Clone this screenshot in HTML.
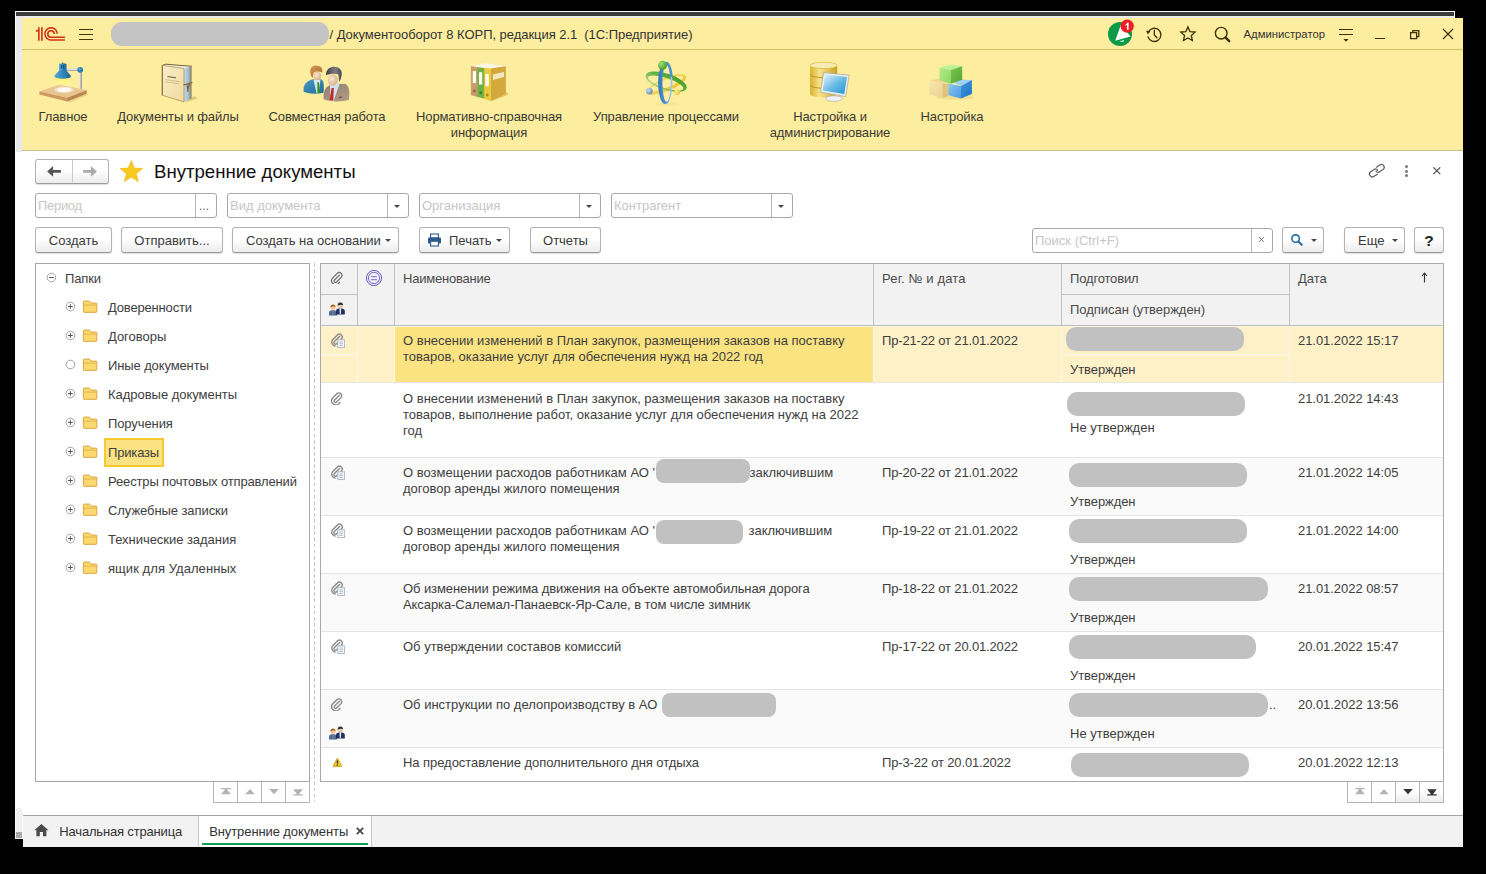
<!DOCTYPE html>
<html lang="ru">
<head>
<meta charset="utf-8">
<title>Внутренние документы</title>
<style>
*{box-sizing:border-box;margin:0;padding:0}
html,body{width:1486px;height:874px;overflow:hidden;background:#000}
body{font-family:"Liberation Sans",sans-serif;font-size:13px;color:#333;position:relative}
.abs{position:absolute}
.t{position:absolute;white-space:pre;line-height:16px}
/* window chrome */
#back{left:15px;top:11px;width:1440px;height:828px;background:#fff}
#darkbar{left:16px;top:12px;width:1438px;height:4px;background:#3b3b3b}
#gtop{left:16px;top:16px;width:1438px;height:3px;background:#ebebeb}
#gleft{left:16px;top:16px;width:6px;height:136px;background:#e9e9e9}
#gleft2{left:16px;top:808px;width:7px;height:31px;background:#f0f0f0}
#gsq{left:16px;top:832px;width:7px;height:6px;background:#a9a9a9}
#main{left:22px;top:18px;width:1441px;height:829px;background:#fff}
#mainR{left:1455px;top:11px;width:8px;height:8px;background:#000}
#yellow{left:22px;top:18px;width:1441px;height:133px;background:#fded9f}
#yl1{left:22px;top:49px;width:1441px;height:1px;background:#d3c16c}
#yl2{left:22px;top:150px;width:1441px;height:1px;background:#cdc38c}
/* section panel */
.sec{position:absolute;top:109px;letter-spacing:-0.12px;text-align:center;line-height:16px;color:#3a3a33;white-space:pre}
/* buttons */
.btn{position:absolute;height:26px;border:1px solid #b3b3b3;border-bottom-color:#9b9b9b;border-radius:3px;background:linear-gradient(#fff 0,#fff 45%,#ececec 100%);box-shadow:0 1px 1px rgba(0,0,0,.13);text-align:center;line-height:25px;color:#3a3a3a;white-space:pre}
.inp{position:absolute;height:25px;border:1px solid #a8a8a8;border-radius:3px;background:#fff;color:#c6c6c6;line-height:24px;padding-left:2px;white-space:pre}
.inp i{position:absolute;top:0;bottom:0;width:1px;background:#b8b8b8}
.dd{position:absolute;top:10.6px;width:0;height:0;border-left:3.3px solid transparent;border-right:3.3px solid transparent;border-top:3.6px solid #484848}
/* tree */
#tree{left:35px;top:263px;width:275px;height:519px;border:1px solid #a6a6a6;background:#fff}
.tr{position:absolute;white-space:pre;line-height:16px;color:#3e3e3e}
/* table */
#tbl{left:320px;top:263px;width:1124px;height:519px;border:1px solid #a6a6a6;background:#fff;overflow:hidden}
.hd{position:absolute;background:#f2f2f2}
.cell{position:absolute;white-space:pre;line-height:16px;color:#3e3e3e}
.pill{position:absolute;background:#c1c1c1;border-radius:10px}
.rl{position:absolute;left:0;width:1122px;height:1px;background:#e4e4e4}
/* tabs */
#tabs{left:23px;top:815px;width:1440px;height:32px;background:#f2f2f2;border-top:1px solid #a3a3a3}
</style>
</head>
<body>
<div class="abs" id="back"></div>
<div class="abs" id="darkbar"></div>
<div class="abs" id="gtop"></div>
<div class="abs" id="gleft"></div>
<div class="abs" id="gleft2"></div>
<div class="abs" id="gsq"></div>
<div class="abs" id="main"></div>
<div class="abs" id="mainR"></div>
<div class="abs" id="yellow"></div>
<div class="abs" id="yl1"></div>
<div class="abs" id="yl2"></div>

<!--TITLEBAR-->
<svg class="abs" style="left:35px;top:27px" width="32" height="15" viewBox="0 0 32 15">
 <g fill="none" stroke="#cf3018" stroke-width="1.6">
  <path d="M0.9 4.3 L3.9 3.3"/>
  <path d="M3.85 0.2 L3.85 13.8"/>
  <path d="M6.9 0.2 L6.9 13.8"/>
  <path d="M22.2 6.85 A6.15 6.15 0 1 0 16.05 13 L29.9 13"/>
  <path d="M19.2 7 A3.2 3.2 0 1 0 16 10.2 L29.9 10.2"/>
 </g>
</svg>
<div class="abs" style="left:79px;top:29px;width:14px;height:1px;background:#3f3600"></div>
<div class="abs" style="left:79px;top:34px;width:14px;height:1px;background:#3f3600"></div>
<div class="abs" style="left:79px;top:39px;width:14px;height:1px;background:#3f3600"></div>
<div class="abs" style="left:111px;top:22px;width:218px;height:24px;border-radius:11px;background:#c4c4c4"></div>
<div class="t" id="ttl" style="letter-spacing:-0.045px;left:329.5px;top:26.5px;color:#333">/ Документооборот 8 КОРП, редакция 2.1  (1С:Предприятие)</div>
<svg class="abs" style="left:1104px;top:18px" width="34" height="31" viewBox="0 0 34 31">
 <circle cx="16" cy="16" r="12" fill="#0b9a48"/>
 <path d="M17 6.5 L26.5 18.5 L11.2 22.8 Z" fill="#fff"/>
 <path d="M15.5 23.2 L20.2 21.9 L19.2 24.2 Z" fill="#d8f0e0"/>
 <circle cx="23.2" cy="8.2" r="6.6" fill="#ee1c25"/>
 <path d="M21.6 6.6 L23.6 4.6 L24.6 4.6 L24.6 11.8 L22.9 11.8 L22.9 7 L21.6 7.9 Z" fill="#fff"/>
</svg>
<svg class="abs" style="left:1144.3px;top:24.5px" width="20.7" height="20.7" viewBox="0 0 22 22">
 <g fill="none" stroke="#3c3206" stroke-width="1.4" stroke-linecap="round">
  <path d="M4.6 7.6 A7 7 0 1 1 4.3 12.6"/>
  <path d="M11 5.6 L11 10.6 L13.8 13.6"/>
 </g>
 <path d="M2.2 6.2 L6.8 6.4 L4.2 10 Z" fill="#3c3206"/>
</svg>
<svg class="abs" style="left:1179.05px;top:25.3px" width="19.1" height="19.1" viewBox="0 0 22 22">
 <path d="M10.3 2.2 L12.7 7.6 L18.5 8.2 L14.2 12.1 L15.4 17.9 L10.3 14.9 L5.2 17.9 L6.4 12.1 L2.1 8.2 L7.9 7.6 Z" fill="none" stroke="#3c3206" stroke-width="1.5" stroke-linejoin="miter"/>
</svg>
<svg class="abs" style="left:1212.2px;top:24.3px" width="22" height="22" viewBox="0 0 22 22">
 <circle cx="9.2" cy="9.2" r="5.8" fill="none" stroke="#3c3206" stroke-width="1.4"/>
 <path d="M13.6 13.6 L17.2 17.2" stroke="#3c3206" stroke-width="2.4" stroke-linecap="round"/>
</svg>
<div class="t" id="adm" style="left:1243.5px;top:25.8px;font-size:11.3px;color:#333">Администратор</div>
<div class="abs" style="left:1339px;top:29px;width:14px;height:1.3px;background:#3c3206"></div>
<div class="abs" style="left:1339px;top:33.8px;width:14px;height:1.3px;background:#3c3206"></div>
<svg class="abs" style="left:1341px;top:38px" width="10" height="5" viewBox="0 0 10 5"><path d="M2.4 1 L7.6 1 L5 3.8 Z" fill="#3c3206"/></svg>
<div class="abs" style="left:1375px;top:38px;width:10px;height:1.4px;background:#3c3206"></div>
<svg class="abs" style="left:1408px;top:28px" width="14" height="14" viewBox="0 0 14 14">
 <g fill="none" stroke="#3c3206" stroke-width="1.3"><rect x="2.6" y="4.6" width="6" height="6"/><path d="M4.8 4.6 L4.8 2.6 L10.8 2.6 L10.8 8.6 L8.6 8.6"/></g>
</svg>
<svg class="abs" style="left:1441px;top:27px" width="14" height="14" viewBox="0 0 14 14">
 <path d="M2 2 L12 12 M12 2 L2 12" stroke="#3c3206" stroke-width="1.2" fill="none"/>
</svg>

<!--SECTIONS-->
<svg class="abs" style="left:36px;top:58px" width="56" height="50" viewBox="0 0 56 50">
 <defs>
  <linearGradient id="lmp" x1="0" x2="1"><stop offset="0" stop-color="#5aaedb"/><stop offset=".5" stop-color="#3388bd"/><stop offset="1" stop-color="#1d6593"/></linearGradient>
  <linearGradient id="pst" x1="0" x2="1"><stop offset="0" stop-color="#f4f4f4"/><stop offset="1" stop-color="#8d8d8d"/></linearGradient>
  <radialGradient id="glw" cx=".5" cy=".5" r=".5"><stop offset="0" stop-color="#fff" stop-opacity="1"/><stop offset=".55" stop-color="#fff" stop-opacity=".85"/><stop offset="1" stop-color="#fff" stop-opacity="0"/></radialGradient>
  <linearGradient id="ray" x1="0" x2="0" y1="0" y2="1"><stop offset="0" stop-color="#fff36b" stop-opacity=".9"/><stop offset="1" stop-color="#fff7a0" stop-opacity=".2"/></linearGradient>
 </defs>
 <path d="M31.1 43.6 L50.7 35.8 L53 36.6 L34 44.6 Z" fill="#e0c870" opacity=".7"/>
 <path d="M3.4 33.5 L23 26.6 L50.7 32.3 L31.1 39.8 Z" fill="#e9c48f"/>
 <path d="M3.4 33.5 L31.1 39.8 L31.1 43.6 L3.4 36.6 Z" fill="#cd995f"/>
 <path d="M31.1 39.8 L50.7 32.3 L50.7 35.8 L31.1 43.6 Z" fill="#b98550"/>
 <ellipse cx="28" cy="31.8" rx="11" ry="3.6" fill="url(#glw)"/>
 <path d="M19 20.5 L34 20.5 L36.5 28.5 L16.5 28.5 Z" fill="url(#ray)"/>
 <rect x="43.1" y="13" width="2.8" height="18" fill="url(#pst)"/>
 <rect x="30" y="10.2" width="13" height="2.3" fill="#dcdcdc"/>
 <rect x="30" y="12" width="13" height=".7" fill="#9a9a9a"/>
 <circle cx="44.2" cy="11.8" r="2.9" fill="#2b7fb3"/>
 <circle cx="43.6" cy="11.1" r="1.2" fill="#5aa9d6"/>
 <rect x="23" y="5.4" width="7.5" height="8" rx="1" fill="url(#lmp)"/>
 <rect x="25.2" y="7" width=".9" height="3.6" fill="#134a70"/><rect x="27.2" y="7" width=".9" height="3.6" fill="#134a70"/>
 <rect x="26.3" y="4.4" width="1" height="1.4" fill="#3a3a3a"/>
 <path d="M23 12.7 L30.5 12.7 L34.9 17.8 Q35.4 19.3 33 20 Q26.6 21.5 20.2 20 Q17.8 19.3 18.3 17.8 Z" fill="url(#lmp)"/>
 
</svg>
<svg class="abs" style="left:158px;top:58px" width="44" height="50" viewBox="0 0 44 50">
 <defs>
  <linearGradient id="fcv" x1="0" x2="1" y1="0" y2="1"><stop offset="0" stop-color="#faeec8"/><stop offset="1" stop-color="#efd99e"/></linearGradient>
  <linearGradient id="fsd" x1="0" x2="1"><stop offset="0" stop-color="#c9dcea"/><stop offset=".6" stop-color="#9dbbd2"/><stop offset="1" stop-color="#8a7a4a"/></linearGradient>
 </defs>
 <path d="M27 44.5 L40 40.5 L36 38 Z" fill="#d9c166" opacity=".8"/>
 <path d="M4.3 7.4 L7.8 6.2 L33.8 8.3 L26 10.5 Z" fill="#e8f0f4"/>
 <path d="M4.3 7.4 L7.8 6.2 L33.8 8.3" fill="none" stroke="#7d5f2a" stroke-width="1"/>
 <path d="M26 10.5 L33.6 8.5 L33.6 40.4 L26 43.9 Z" fill="url(#fsd)"/>
 <path d="M4.3 7.4 L26 10.5 L26 43.9 L4.3 37.3 Z" fill="url(#fcv)" stroke="#a88546" stroke-width=".7"/>
 <path d="M4.3 7.4 L4.3 37.3" stroke="#8a6a30" stroke-width="1"/>
 <path d="M9.5 18.6 L18 19.8" stroke="#6a5a3a" stroke-width="1"/>
 <path d="M7.5 21.6 L21.5 23.6 M7.5 23.8 L20.5 25.6" stroke="#b8a574" stroke-width=".6"/>
 <path d="M25.5 27 L34.5 24.5 M29 26 L30 34 M31.5 25.5 L29.5 33" stroke="#7a6030" stroke-width="1.1" fill="none"/>
</svg>
<svg class="abs" style="left:300px;top:61.5px" width="54" height="46" viewBox="0 0 54 46">
 <defs>
  <linearGradient id="bsu" x1="0" x2="1" y1="0" y2="1"><stop offset="0" stop-color="#4a9ac4"/><stop offset="1" stop-color="#1f6b98"/></linearGradient>
  <linearGradient id="gsu" x1="0" x2="1" y1="0" y2="1"><stop offset="0" stop-color="#8f7e72"/><stop offset="1" stop-color="#b39c84"/></linearGradient>
  <radialGradient id="fce" cx=".4" cy=".4" r=".7"><stop offset="0" stop-color="#fbe7d2"/><stop offset="1" stop-color="#d8a981"/></radialGradient>
  <linearGradient id="hr1" x1="0" x2="1" y1="0" y2="1"><stop offset="0" stop-color="#d99a55"/><stop offset="1" stop-color="#a8662c"/></linearGradient>
  <linearGradient id="hr2" x1="0" x2="1"><stop offset="0" stop-color="#3f3f44"/><stop offset=".6" stop-color="#7a7a80"/><stop offset="1" stop-color="#4a4a50"/></linearGradient>
 </defs>
 <g transform="translate(0 3.26) scale(1 .923) translate(0 -3.2)">
 <path d="M3.6 32 C3 24 6 20.5 13 18.3 L21 18.3 C24 20 24 24 23.6 33 C17 34.5 9 34.5 3.6 32 Z" fill="url(#bsu)"/>
 <path d="M13.5 18.6 L20.5 18.6 L19 33.6 L16.5 33.6 Z" fill="#d6e8f2"/>
 <path d="M17.3 21.6 L19 21.6 L20.2 33 L17.4 33.6 Z" fill="#2f8f2c"/>
 <ellipse cx="17.3" cy="14.8" rx="3.7" ry="4.4" fill="url(#fce)"/>
 <path d="M10.5 12.5 C9 5.5 13 3.2 17 3.6 C21.5 3.8 23.2 7 22 11 C19 9.5 15.5 10 14 11 C13 12.5 13 15 12.8 17 C11.5 16 10.8 14.5 10.5 12.5 Z" fill="url(#hr1)"/>
 </g>
 <g transform="translate(0 4.5) scale(1 .95) translate(0 -5.4)">
 <path d="M23.8 40 C23 31 25 26.5 32 24 L45 23.5 C50 26 49.6 33 49 40.5 C42 42.8 31 43 23.8 40 Z" fill="url(#gsu)"/>
 <path d="M30 25 L40 22.6 L36.5 33 L33.5 41.6 L30.5 41.6 Z" fill="#cfe3ef"/>
 <path d="M31.6 28 L33.8 28 L33.2 41.4 L29.6 41 Z" fill="#c8242a"/>
 <path d="M39 38 L42 37.5" stroke="#4a3f36" stroke-width="1"/>
 <ellipse cx="32.8" cy="19.6" rx="5" ry="6" fill="url(#fce)"/>
 <path d="M26 14.5 C26 7.5 31 5.4 35.5 5.8 C41 6.2 42.6 11 41.4 15.6 C41 18.5 40 20.5 39.2 21.6 C38.8 18.5 38.8 15.6 38 13.6 C34 12.4 29.5 13.2 26 14.5 Z" fill="url(#hr2)"/>
 </g>
</svg>
<svg class="abs" style="left:466px;top:58px" width="46" height="50" viewBox="0 0 46 50">
 <path d="M24.8 43.6 L43 36.5 L40 34 Z" fill="#d9c166" opacity=".8"/>
 <path d="M5.3 8.3 L19.5 5.2 L39.9 8.3 L24.8 10.5 Z" fill="#fbf7e4"/>
 <path d="M5.3 8.3 L11.6 9.3 L11.6 38.9 L5.3 37.3 Z" fill="#c99b6a"/>
 <path d="M11.6 9.3 L17.9 9.9 L17.9 40.6 L11.6 38.9 Z" fill="#67b443"/>
 <path d="M17.9 9.9 L24.8 10.5 L24.8 43.3 L17.9 40.6 Z" fill="#ecca3e"/>
 <path d="M24.8 10.5 L39.9 8.3 L39.9 35.7 L24.8 43.3 Z" fill="#d3a93e"/>
 <path d="M5.3 8.3 L5.3 37.3 M11.6 9.3 L11.6 38.9 M17.9 9.9 L17.9 40.6" stroke="#9a7a38" stroke-width=".6" opacity=".6"/>
 <rect x="6.8" y="13" width="3.2" height="12" fill="#fffdf2"/>
 <rect x="13" y="14.2" width="3.2" height="12.4" fill="#fbfff2"/>
 <rect x="19.4" y="16" width="3.4" height="12.2" fill="#fffdf0"/>
 <path d="M27 16.5 L38 14 L38 19 L27 22 Z" fill="#f3e7bf"/>
 <circle cx="8.4" cy="33" r="1.3" fill="#8a6240"/><circle cx="14.7" cy="34.8" r="1.3" fill="#2f7d28"/><circle cx="21.2" cy="37" r="1.4" fill="#b08a22"/>
</svg>
<svg class="abs" style="left:640px;top:58px" width="52" height="50" viewBox="0 0 52 50">
 <defs>
  <linearGradient id="br" x1="0" x2="1"><stop offset="0" stop-color="#2f78c0"/><stop offset=".45" stop-color="#4b90d0"/><stop offset="1" stop-color="#a5cdea"/></linearGradient>
  <linearGradient id="gr" x1="0" x2="1" y1="1" y2="0"><stop offset="0" stop-color="#c4e3ab"/><stop offset=".45" stop-color="#63b440"/><stop offset="1" stop-color="#3f9a24"/></linearGradient>
  <linearGradient id="yr" x1="0" x2="1" y1="0" y2="1"><stop offset="0" stop-color="#f6dc6a"/><stop offset="1" stop-color="#eec228"/></linearGradient>
  <radialGradient id="gs" cx=".35" cy=".35" r=".7"><stop offset="0" stop-color="#a6e47a"/><stop offset="1" stop-color="#3f9a24"/></radialGradient>
  <radialGradient id="bs" cx=".35" cy=".35" r=".7"><stop offset="0" stop-color="#c4dcf0"/><stop offset="1" stop-color="#5f8db8"/></radialGradient>
  <radialGradient id="ys" cx=".35" cy=".35" r=".7"><stop offset="0" stop-color="#fff0a0"/><stop offset="1" stop-color="#e8bc28"/></radialGradient>
 </defs>
 <ellipse cx="26" cy="46.3" rx="12" ry="1.6" fill="#e6d27c" opacity=".3"/>
 <g transform="translate(26.25 26) rotate(-22.7)">
  <path fill-rule="evenodd" fill="url(#yr)" d="M-21.2 0.5 A21.2 6.6 0 1 0 21.2 0.5 A21.2 6.6 0 1 0 -21.2 0.5 Z M-18.6 -0.3 A18.6 3.9 0 1 0 18.6 -0.3 A18.6 3.9 0 1 0 -18.6 -0.3 Z"/>
 </g>
 <g transform="translate(25.9 24.4) rotate(17.9)">
  <path fill-rule="evenodd" fill="url(#gr)" d="M-21.5 -0.7 A21.5 8.1 0 1 0 21.5 -0.7 A21.5 8.1 0 1 0 -21.5 -0.7 Z M-18.5 0.7 A18.5 5.1 0 1 0 18.5 0.7 A18.5 5.1 0 1 0 -18.5 0.7 Z"/>
 </g>
 <path fill-rule="evenodd" fill="url(#br)" d="M18.1 25 A7.2 21.1 0 1 0 32.5 25 A7.2 21.1 0 1 0 18.1 25 Z M22.4 25 A4.2 18.6 0 1 0 30.8 25 A4.2 18.6 0 1 0 22.4 25 Z"/>
 <path d="M26.6 5 C28.9 6 30.6 10.5 31.3 17.5" fill="none" stroke="#4b90d0" stroke-width="2.6" stroke-linecap="round"/>
 <circle cx="22.5" cy="7.2" r="4.5" fill="url(#gs)"/>
 <circle cx="9.4" cy="33.2" r="3.3" fill="url(#bs)"/>
 <circle cx="37.3" cy="34" r="2.8" fill="url(#ys)"/>
</svg>
<svg class="abs" style="left:806px;top:58px" width="48" height="48" viewBox="0 0 48 48">
 <defs>
  <linearGradient id="cy" x1="0" x2="1"><stop offset="0" stop-color="#d9b02c"/><stop offset=".35" stop-color="#f7e48a"/><stop offset="1" stop-color="#caa024"/></linearGradient>
  <linearGradient id="scr" x1="0" x2="1" y1="0" y2="1"><stop offset="0" stop-color="#e4f4fc"/><stop offset=".5" stop-color="#6cbde6"/><stop offset="1" stop-color="#1f93d2"/></linearGradient>
 </defs>
 <path d="M4.1 7.4 L4.1 36 A13.5 3.4 0 0 0 31.2 36 L31.2 7.4 Z" fill="url(#cy)"/>
 <path d="M4.1 16.4 A13.5 3.2 0 0 0 31.2 16.4 M4.1 27 A13.5 3.2 0 0 0 31.2 27" fill="none" stroke="#b8921e" stroke-width=".9"/>
 <ellipse cx="17.65" cy="7.4" rx="13.5" ry="3.2" fill="#f8edb0" stroke="#d9b640" stroke-width=".7"/>
 <ellipse cx="28" cy="40.6" rx="8.6" ry="2.8" fill="#f0f0f0" stroke="#a9a9a9" stroke-width=".6"/>
 <path d="M17.6 14.6 L43.2 17.2 L39.7 38.6 L14.5 34.2 Z" fill="#ececec" stroke="#a7a7a0" stroke-width=".7"/>
 <path d="M19.2 16.8 L41 19 L38.2 36 L16.8 32.4 Z" fill="url(#scr)"/>
</svg>
<svg class="abs" style="left:924px;top:59.3px" width="52" height="44" viewBox="0 0 52 44">
 <defs>
  <linearGradient id="cg1" x1="0" x2="1" y1="0" y2="1"><stop offset="0" stop-color="#b2ec8c"/><stop offset="1" stop-color="#8ad862"/></linearGradient>
  <linearGradient id="cg2" x1="0" x2="1" y1="0" y2="1"><stop offset="0" stop-color="#7cc853"/><stop offset="1" stop-color="#4fa52e"/></linearGradient>
  <linearGradient id="cb1" x1="0" x2="1" y1="0" y2="1"><stop offset="0" stop-color="#8cc6f0"/><stop offset="1" stop-color="#4a9be0"/></linearGradient>
  <linearGradient id="cb2" x1="0" x2="1" y1="0" y2="1"><stop offset="0" stop-color="#3f96dc"/><stop offset="1" stop-color="#1f74c4"/></linearGradient>
  <linearGradient id="ct1" x1="0" x2="1" y1="0" y2="1"><stop offset="0" stop-color="#f7e6b0"/><stop offset="1" stop-color="#e8cf8a"/></linearGradient>
 </defs>
 <ellipse cx="31" cy="38.6" rx="19" ry="1.8" fill="#e3cd78" opacity=".45"/>
 <path d="M5.2 21.8 L15.6 19.5 L24.5 23 L18.5 24.5 Z" fill="#f1d993"/>
 <path d="M5.2 21.8 L18.5 24.5 L24.6 24.8 L24.6 37 L18.5 38.8 L5.2 35.6 Z" fill="url(#ct1)"/>
 <path d="M18.5 24.5 L24.6 24.8 L24.6 37 L18.5 38.8 Z" fill="#d9c07a" opacity=".8"/>
 <path d="M34 20.5 L47.9 21 L37 26.7 L30 24 Z" fill="#9ad0f4"/>
 <path d="M24.5 24.8 L37 26.9 L37 39.6 L24.5 36.3 Z" fill="url(#cb1)"/>
 <path d="M37 26.9 L47.9 21 L47.9 35 L37 39.6 Z" fill="url(#cb2)"/>
 <path d="M15.6 8.5 L27.3 5.5 L38.2 7.3 L26.6 10.9 Z" fill="#bdf298"/>
 <path d="M15.6 8.5 L26.6 10.9 L26.6 24.8 L15.6 21 Z" fill="url(#cg1)"/>
 <path d="M26.6 10.9 L38.2 7.3 L38.2 20.8 L26.6 24.8 Z" fill="url(#cg2)"/>
</svg>
<div class="sec" style="left:2px;width:122px">Главное</div>
<div class="sec" style="left:117px;width:122px">Документы и файлы</div>
<div class="sec" style="left:266px;width:122px">Совместная работа</div>
<div class="sec" style="left:409px;width:160px">Нормативно-справочная
информация</div>
<div class="sec" style="left:586px;width:160px">Управление процессами</div>
<div class="sec" style="left:750px;width:160px">Настройка и
администрирование</div>
<div class="sec" style="left:892px;width:120px">Настройка</div>

<!--FORMHEAD-->
<div class="btn" style="left:35px;top:159px;width:74px;height:24.5px"></div>
<div class="abs" style="left:72px;top:160px;width:1px;height:22px;background:#c9c9c9"></div>
<svg class="abs" style="left:46px;top:165px" width="16" height="13" viewBox="0 0 16 13"><path d="M1.1 6.4 L7.1 1.1 L7.1 5 L14.9 5 L14.9 7.8 L7.1 7.8 L7.1 11.7 Z" fill="#555"/></svg>
<svg class="abs" style="left:82px;top:164.5px" width="16" height="13" viewBox="0 0 16 13"><path d="M14.9 6.4 L8.9 1.1 L8.9 5 L1.1 5 L1.1 7.8 L8.9 7.8 L8.9 11.7 Z" fill="#ababab"/></svg>
<svg class="abs" style="left:119px;top:159px" width="25" height="24" viewBox="0 0 25 24"><path d="M12.3 1.6 L15.3 9 L23.6 9.6 L17.2 14.8 L19.3 22.6 L12.3 18.2 L5.3 22.6 L7.4 14.8 L1 9.6 L9.3 9 Z" fill="#f9c91e" stroke="#eab414" stroke-width=".6"/></svg>
<div class="t" id="ftitle" style="left:154px;top:159.5px;font-size:18.6px;line-height:24px;color:#111">Внутренние документы</div>
<svg class="abs" style="left:1367px;top:161px" width="20" height="20" viewBox="0 0 20 20">
 <g fill="none" stroke="#606060" stroke-width="1.2" stroke-linecap="round" transform="rotate(12 10 10)">
  <path d="M8.6 6.4 L11.4 3.6 A2.7 2.7 0 0 1 15.6 7.4 L12.8 10.2 A2.7 2.7 0 0 1 9 10.2"/>
  <path d="M11 13 L8.2 15.8 A2.7 2.7 0 0 1 4 12 L6.8 9.2 A2.7 2.7 0 0 1 10.6 9.2"/>
 </g>
</svg>
<div class="abs" style="left:1405px;top:165px;width:3px;height:3px;border-radius:50%;background:#777"></div>
<div class="abs" style="left:1405px;top:169.5px;width:3px;height:3px;border-radius:50%;background:#777"></div>
<div class="abs" style="left:1405px;top:174px;width:3px;height:3px;border-radius:50%;background:#777"></div>
<svg class="abs" style="left:1431px;top:165px" width="12" height="12" viewBox="0 0 12 12"><path d="M2.4 2.4 L9.2 9.2 M9.2 2.4 L2.4 9.2" stroke="#4a4a4a" stroke-width="1.2"/></svg>

<div class="inp" style="left:35px;top:193px;width:182px"><span style="letter-spacing:-0.3px">Период</span><i style="left:159px"></i><span class="abs" style="left:163px;top:0px;color:#666;font-size:12px">...</span></div>
<div class="inp" style="left:227px;top:193px;width:182px">Вид документа<i style="left:159px"></i><b class="dd" style="left:166px"></b></div>
<div class="inp" style="left:419px;top:193px;width:182px">Организация<i style="left:159px"></i><b class="dd" style="left:166px"></b></div>
<div class="inp" style="left:611px;top:193px;width:182px">Контрагент<i style="left:159px"></i><b class="dd" style="left:166px"></b></div>

<div class="btn" style="left:35px;top:227px;width:77px">Создать</div>
<div class="btn" style="left:121px;top:227px;width:102px">Отправить...</div>
<div class="btn" style="left:232px;top:227px;width:167px;text-align:left;padding-left:13px">Создать на основании<b class="dd" style="left:152px;top:11.4px"></b></div>
<div class="btn" style="left:419px;top:227px;width:91px;text-align:left;padding-left:29px">Печать<b class="dd" style="left:76px;top:11.4px"></b>
 <svg class="abs" style="left:7px;top:5px" width="15" height="14" viewBox="0 0 15 14">
  <rect x="3.6" y="1" width="7.8" height="4" fill="#fff" stroke="#2c5a8c" stroke-width="1.1"/>
  <rect x="1" y="4.6" width="13" height="5.8" rx="1" fill="#2c5a8c"/>
  <rect x="3.6" y="8.2" width="7.8" height="4.8" fill="#fff" stroke="#2c5a8c" stroke-width="1.1"/>
 </svg>
</div>
<div class="btn" style="left:530px;top:227px;width:71px">Отчеты</div>

<div class="inp" style="left:1032px;top:228px;width:241px">Поиск (Ctrl+F)<i style="left:218px"></i>
 <svg class="abs" style="left:224px;top:6.4px" width="9" height="9" viewBox="0 0 9 9"><path d="M2 2 L6.8 6.8 M6.8 2 L2 6.8" stroke="#6a6a6a" stroke-width="1"/></svg>
</div>
<div class="btn" style="left:1282px;top:227px;width:42px"><b class="dd" style="left:28px;top:11.4px"></b>
 <svg class="abs" style="left:7.4px;top:5.2px" width="14" height="14" viewBox="0 0 16 16"><circle cx="6.4" cy="6.4" r="4.3" fill="#fff" stroke="#2f6fa8" stroke-width="1.9"/><path d="M9.6 9.6 L13.4 13.4" stroke="#2f6fa8" stroke-width="2.5" stroke-linecap="round"/></svg>
</div>
<div class="btn" style="left:1344px;top:227px;width:61px;text-align:left;padding-left:13px">Еще<b class="dd" style="left:47px;top:11.4px"></b></div>
<div class="btn" style="left:1414px;top:227px;width:30px;font-weight:bold;font-size:15.5px;color:#222">?</div>

<!--TREE-->
<div class="abs" id="tree"></div>
<svg class="abs" style="left:46px;top:272px" width="11" height="11" viewBox="0 0 11 11"><circle cx="5.4" cy="5.5" r="4.3" fill="#fff" stroke="#a2a2a2" stroke-width="1"/><path d="M3 5.5 L7.8 5.5" stroke="#555" stroke-width="1"/></svg>
<div class="tr" style="left:65px;top:271.3px;letter-spacing:-0.150px">Папки</div>
<svg class="abs" style="left:65px;top:301.3px" width="11" height="11" viewBox="0 0 11 11"><circle cx="5.4" cy="5.5" r="4.3" fill="#fff" stroke="#a2a2a2" stroke-width="1"/><path d="M3 5.5 L7.8 5.5 M5.4 3.1 L5.4 7.9" stroke="#555" stroke-width="1"/></svg>
<svg class="abs" style="left:82px;top:300.0px" width="16" height="13" viewBox="0 0 16 13"><path d="M1.4 1.9 Q1.4 1.1 2.2 1.1 L7 1.1 Q7.6 1.1 8 1.6 L9.2 3.1 L14.2 3.1 Q14.8 3.1 14.8 3.7 L14.8 11.7 Q14.8 12.3 14.2 12.3 L2 12.3 Q1.4 12.3 1.4 11.7 Z" fill="#fbd970" stroke="#dba73e" stroke-width="1"/><path d="M1.6 5.1 L14.6 5.1" stroke="#dfae48" stroke-width=".9"/></svg>
<div class="tr" style="left:108px;top:300.3px;letter-spacing:-0.173px">Доверенности</div>
<svg class="abs" style="left:65px;top:330.3px" width="11" height="11" viewBox="0 0 11 11"><circle cx="5.4" cy="5.5" r="4.3" fill="#fff" stroke="#a2a2a2" stroke-width="1"/><path d="M3 5.5 L7.8 5.5 M5.4 3.1 L5.4 7.9" stroke="#555" stroke-width="1"/></svg>
<svg class="abs" style="left:82px;top:329.0px" width="16" height="13" viewBox="0 0 16 13"><path d="M1.4 1.9 Q1.4 1.1 2.2 1.1 L7 1.1 Q7.6 1.1 8 1.6 L9.2 3.1 L14.2 3.1 Q14.8 3.1 14.8 3.7 L14.8 11.7 Q14.8 12.3 14.2 12.3 L2 12.3 Q1.4 12.3 1.4 11.7 Z" fill="#fbd970" stroke="#dba73e" stroke-width="1"/><path d="M1.6 5.1 L14.6 5.1" stroke="#dfae48" stroke-width=".9"/></svg>
<div class="tr" style="left:108px;top:329.3px;letter-spacing:-0.029px">Договоры</div>
<svg class="abs" style="left:65px;top:359.3px" width="11" height="11" viewBox="0 0 11 11"><circle cx="5.4" cy="5.5" r="4.3" fill="#fff" stroke="#a2a2a2" stroke-width="1"/></svg>
<svg class="abs" style="left:82px;top:358.0px" width="16" height="13" viewBox="0 0 16 13"><path d="M1.4 1.9 Q1.4 1.1 2.2 1.1 L7 1.1 Q7.6 1.1 8 1.6 L9.2 3.1 L14.2 3.1 Q14.8 3.1 14.8 3.7 L14.8 11.7 Q14.8 12.3 14.2 12.3 L2 12.3 Q1.4 12.3 1.4 11.7 Z" fill="#fbd970" stroke="#dba73e" stroke-width="1"/><path d="M1.6 5.1 L14.6 5.1" stroke="#dfae48" stroke-width=".9"/></svg>
<div class="tr" style="left:108px;top:358.3px;letter-spacing:-0.115px">Иные документы</div>
<svg class="abs" style="left:65px;top:388.3px" width="11" height="11" viewBox="0 0 11 11"><circle cx="5.4" cy="5.5" r="4.3" fill="#fff" stroke="#a2a2a2" stroke-width="1"/><path d="M3 5.5 L7.8 5.5 M5.4 3.1 L5.4 7.9" stroke="#555" stroke-width="1"/></svg>
<svg class="abs" style="left:82px;top:387.0px" width="16" height="13" viewBox="0 0 16 13"><path d="M1.4 1.9 Q1.4 1.1 2.2 1.1 L7 1.1 Q7.6 1.1 8 1.6 L9.2 3.1 L14.2 3.1 Q14.8 3.1 14.8 3.7 L14.8 11.7 Q14.8 12.3 14.2 12.3 L2 12.3 Q1.4 12.3 1.4 11.7 Z" fill="#fbd970" stroke="#dba73e" stroke-width="1"/><path d="M1.6 5.1 L14.6 5.1" stroke="#dfae48" stroke-width=".9"/></svg>
<div class="tr" style="left:108px;top:387.3px;letter-spacing:-0.029px">Кадровые документы</div>
<svg class="abs" style="left:65px;top:417.3px" width="11" height="11" viewBox="0 0 11 11"><circle cx="5.4" cy="5.5" r="4.3" fill="#fff" stroke="#a2a2a2" stroke-width="1"/><path d="M3 5.5 L7.8 5.5 M5.4 3.1 L5.4 7.9" stroke="#555" stroke-width="1"/></svg>
<svg class="abs" style="left:82px;top:416.0px" width="16" height="13" viewBox="0 0 16 13"><path d="M1.4 1.9 Q1.4 1.1 2.2 1.1 L7 1.1 Q7.6 1.1 8 1.6 L9.2 3.1 L14.2 3.1 Q14.8 3.1 14.8 3.7 L14.8 11.7 Q14.8 12.3 14.2 12.3 L2 12.3 Q1.4 12.3 1.4 11.7 Z" fill="#fbd970" stroke="#dba73e" stroke-width="1"/><path d="M1.6 5.1 L14.6 5.1" stroke="#dfae48" stroke-width=".9"/></svg>
<div class="tr" style="left:108px;top:416.3px;letter-spacing:-0.100px">Поручения</div>
<div class="abs" style="left:104px;top:438.3px;width:60px;height:28.5px;background:#fce283;border:2px solid #f6c932"></div>
<svg class="abs" style="left:65px;top:446.3px" width="11" height="11" viewBox="0 0 11 11"><circle cx="5.4" cy="5.5" r="4.3" fill="#fff" stroke="#a2a2a2" stroke-width="1"/><path d="M3 5.5 L7.8 5.5 M5.4 3.1 L5.4 7.9" stroke="#555" stroke-width="1"/></svg>
<svg class="abs" style="left:82px;top:445.0px" width="16" height="13" viewBox="0 0 16 13"><path d="M1.4 1.9 Q1.4 1.1 2.2 1.1 L7 1.1 Q7.6 1.1 8 1.6 L9.2 3.1 L14.2 3.1 Q14.8 3.1 14.8 3.7 L14.8 11.7 Q14.8 12.3 14.2 12.3 L2 12.3 Q1.4 12.3 1.4 11.7 Z" fill="#fbd970" stroke="#dba73e" stroke-width="1"/><path d="M1.6 5.1 L14.6 5.1" stroke="#dfae48" stroke-width=".9"/></svg>
<div class="tr" style="left:108px;top:445.3px;letter-spacing:-0.167px">Приказы</div>
<svg class="abs" style="left:65px;top:475.3px" width="11" height="11" viewBox="0 0 11 11"><circle cx="5.4" cy="5.5" r="4.3" fill="#fff" stroke="#a2a2a2" stroke-width="1"/><path d="M3 5.5 L7.8 5.5 M5.4 3.1 L5.4 7.9" stroke="#555" stroke-width="1"/></svg>
<svg class="abs" style="left:82px;top:474.0px" width="16" height="13" viewBox="0 0 16 13"><path d="M1.4 1.9 Q1.4 1.1 2.2 1.1 L7 1.1 Q7.6 1.1 8 1.6 L9.2 3.1 L14.2 3.1 Q14.8 3.1 14.8 3.7 L14.8 11.7 Q14.8 12.3 14.2 12.3 L2 12.3 Q1.4 12.3 1.4 11.7 Z" fill="#fbd970" stroke="#dba73e" stroke-width="1"/><path d="M1.6 5.1 L14.6 5.1" stroke="#dfae48" stroke-width=".9"/></svg>
<div class="tr" style="left:108px;top:474.3px;letter-spacing:-0.144px">Реестры почтовых отправлений</div>
<svg class="abs" style="left:65px;top:504.3px" width="11" height="11" viewBox="0 0 11 11"><circle cx="5.4" cy="5.5" r="4.3" fill="#fff" stroke="#a2a2a2" stroke-width="1"/><path d="M3 5.5 L7.8 5.5 M5.4 3.1 L5.4 7.9" stroke="#555" stroke-width="1"/></svg>
<svg class="abs" style="left:82px;top:503.0px" width="16" height="13" viewBox="0 0 16 13"><path d="M1.4 1.9 Q1.4 1.1 2.2 1.1 L7 1.1 Q7.6 1.1 8 1.6 L9.2 3.1 L14.2 3.1 Q14.8 3.1 14.8 3.7 L14.8 11.7 Q14.8 12.3 14.2 12.3 L2 12.3 Q1.4 12.3 1.4 11.7 Z" fill="#fbd970" stroke="#dba73e" stroke-width="1"/><path d="M1.6 5.1 L14.6 5.1" stroke="#dfae48" stroke-width=".9"/></svg>
<div class="tr" style="left:108px;top:503.3px;letter-spacing:-0.075px">Служебные записки</div>
<svg class="abs" style="left:65px;top:533.3px" width="11" height="11" viewBox="0 0 11 11"><circle cx="5.4" cy="5.5" r="4.3" fill="#fff" stroke="#a2a2a2" stroke-width="1"/><path d="M3 5.5 L7.8 5.5 M5.4 3.1 L5.4 7.9" stroke="#555" stroke-width="1"/></svg>
<svg class="abs" style="left:82px;top:532.0px" width="16" height="13" viewBox="0 0 16 13"><path d="M1.4 1.9 Q1.4 1.1 2.2 1.1 L7 1.1 Q7.6 1.1 8 1.6 L9.2 3.1 L14.2 3.1 Q14.8 3.1 14.8 3.7 L14.8 11.7 Q14.8 12.3 14.2 12.3 L2 12.3 Q1.4 12.3 1.4 11.7 Z" fill="#fbd970" stroke="#dba73e" stroke-width="1"/><path d="M1.6 5.1 L14.6 5.1" stroke="#dfae48" stroke-width=".9"/></svg>
<div class="tr" style="left:108px;top:532.3px;letter-spacing:-0.039px">Технические задания</div>
<svg class="abs" style="left:65px;top:562.3px" width="11" height="11" viewBox="0 0 11 11"><circle cx="5.4" cy="5.5" r="4.3" fill="#fff" stroke="#a2a2a2" stroke-width="1"/><path d="M3 5.5 L7.8 5.5 M5.4 3.1 L5.4 7.9" stroke="#555" stroke-width="1"/></svg>
<svg class="abs" style="left:82px;top:561.0px" width="16" height="13" viewBox="0 0 16 13"><path d="M1.4 1.9 Q1.4 1.1 2.2 1.1 L7 1.1 Q7.6 1.1 8 1.6 L9.2 3.1 L14.2 3.1 Q14.8 3.1 14.8 3.7 L14.8 11.7 Q14.8 12.3 14.2 12.3 L2 12.3 Q1.4 12.3 1.4 11.7 Z" fill="#fbd970" stroke="#dba73e" stroke-width="1"/><path d="M1.6 5.1 L14.6 5.1" stroke="#dfae48" stroke-width=".9"/></svg>
<div class="tr" style="left:108px;top:561.3px;letter-spacing:0.065px">ящик для Удаленных</div>
<div class="abs" style="left:213px;top:781px;width:97px;height:22px;border:1px solid #b5b5b5;border-top-color:#a9a9a9;background:#fff"></div>
<div class="abs" style="left:237px;top:781px;width:1px;height:21px;background:#b5b5b5"></div>
<div class="abs" style="left:261px;top:781px;width:1px;height:21px;background:#b5b5b5"></div>
<div class="abs" style="left:285px;top:781px;width:1px;height:21px;background:#b5b5b5"></div>
<svg class="abs" style="left:219.5px;top:786px" width="12" height="11" viewBox="0 0 12 11"><path d="M1.2 2 L10.8 2 L10.8 3.2 L6.9 3.2 L10.8 8.2 L1.2 8.2 L5.1 3.2 L1.2 3.2 Z" fill="#b3b3b3"/></svg>
<svg class="abs" style="left:243.5px;top:786px" width="12" height="11" viewBox="0 0 12 11"><path d="M6 3 L10.8 8.2 L1.2 8.2 Z" fill="#b3b3b3"/></svg>
<svg class="abs" style="left:267.5px;top:786px" width="12" height="11" viewBox="0 0 12 11"><path d="M6 8.2 L10.8 3 L1.2 3 Z" fill="#b3b3b3"/></svg>
<svg class="abs" style="left:291.5px;top:786px" width="12" height="11" viewBox="0 0 12 11"><path d="M1.2 9.4 L10.8 9.4 L10.8 8.2 L6.9 8.2 L10.8 3.2 L1.2 3.2 L5.1 8.2 L1.2 8.2 Z" fill="#b3b3b3"/></svg>
<div class="abs" style="left:314px;top:263px;width:1px;height:538px;background:repeating-linear-gradient(to bottom,#c6c6c6 0,#c6c6c6 3.7px,transparent 3.7px,transparent 6.1px)"></div>
<!--TABLE-->
<div class="abs" style="left:320px;top:263px;width:1124px;height:519px;border:1px solid #a9a9a9;background:#fff"></div>
<div class="abs" style="left:321px;top:264px;width:1122px;height:61px;background:#f2f2f2"></div>
<div class="abs" style="left:321px;top:325px;width:1122px;height:1px;background:#bcbcbc"></div>
<div class="abs" style="left:357px;top:264px;width:1px;height:61px;background:#c2c2c2"></div>
<div class="abs" style="left:394px;top:264px;width:1px;height:61px;background:#c2c2c2"></div>
<div class="abs" style="left:873px;top:264px;width:1px;height:61px;background:#c2c2c2"></div>
<div class="abs" style="left:1061px;top:264px;width:1px;height:61px;background:#c2c2c2"></div>
<div class="abs" style="left:1289px;top:264px;width:1px;height:61px;background:#c2c2c2"></div>
<div class="abs" style="left:321px;top:294px;width:36px;height:1px;background:#c2c2c2"></div>
<div class="abs" style="left:1062px;top:294px;width:227px;height:1px;background:#c2c2c2"></div>
<div class="cell" style="left:403px;top:270.5px;color:#4a4a4a;letter-spacing:-0.22px">Наименование</div>
<div class="cell" style="left:882px;top:270.5px;color:#4a4a4a;letter-spacing:0.15px">Рег. № и дата</div>
<div class="cell" style="left:1070px;top:270.5px;color:#4a4a4a;letter-spacing:-0.16px">Подготовил</div>
<div class="cell" style="left:1070px;top:301.5px;color:#4a4a4a;letter-spacing:-0.035px">Подписан (утвержден)</div>
<div class="cell" style="left:1298px;top:270.5px;color:#4a4a4a">Дата</div>
<svg class="abs" style="left:1420px;top:272px" width="9" height="12" viewBox="0 0 9 12"><path d="M4.5 1.2 L4.5 10.6 M2 4 L4.5 1.2 L7 4" fill="none" stroke="#333" stroke-width="1.1"/></svg>
<div class="abs" style="left:321px;top:326px;width:1122px;height:56px;background:#fef1c8"></div>
<div class="abs" style="left:395px;top:327px;width:478px;height:55px;background:#fce382"></div>
<div class="abs" style="left:357px;top:326px;width:1px;height:56px;background:#fffaf0"></div>
<div class="abs" style="left:394px;top:326px;width:1px;height:56px;background:#fffaf0"></div>
<div class="abs" style="left:873px;top:326px;width:1px;height:56px;background:#fffaf0"></div>
<div class="abs" style="left:1061px;top:326px;width:1px;height:56px;background:#fffaf0"></div>
<div class="abs" style="left:1289px;top:326px;width:1px;height:56px;background:#fffaf0"></div>
<div class="abs" style="left:321px;top:354px;width:36px;height:1px;background:#fffaf0"></div>
<div class="abs" style="left:1062px;top:354px;width:227px;height:1px;background:#fffaf0"></div>
<div class="abs" style="left:321px;top:326px;width:1122px;height:1px;background:#fdf8e4"></div>
<div class="abs" style="left:321px;top:382px;width:1122px;height:1px;background:#e5e5e5"></div>
<div class="abs" style="left:321px;top:457px;width:1122px;height:1px;background:#e5e5e5"></div>
<div class="abs" style="left:321px;top:458px;width:1122px;height:57px;background:#fafafa"></div>
<div class="abs" style="left:321px;top:515px;width:1122px;height:1px;background:#e5e5e5"></div>
<div class="abs" style="left:321px;top:573px;width:1122px;height:1px;background:#e5e5e5"></div>
<div class="abs" style="left:321px;top:574px;width:1122px;height:57px;background:#fafafa"></div>
<div class="abs" style="left:321px;top:631px;width:1122px;height:1px;background:#e5e5e5"></div>
<div class="abs" style="left:321px;top:689px;width:1122px;height:1px;background:#e5e5e5"></div>
<div class="abs" style="left:321px;top:690px;width:1122px;height:57px;background:#fafafa"></div>
<div class="abs" style="left:321px;top:747px;width:1122px;height:1px;background:#e5e5e5"></div>
<!--TABLE2-->
<div class="cell nm" style="left:403px;top:332.5px">О внесении изменений в План закупок, размещения заказов на поставку
товаров, оказание услуг для обеспечения нужд на 2022 год</div>
<div class="cell" style="left:882px;top:332.5px;letter-spacing:-0.16px">Пр-21-22 от 21.01.2022</div>
<div class="cell" style="left:1070px;top:361.5px;letter-spacing:-0.08px">Утвержден</div>
<div class="cell" style="left:1298px;top:332.5px;letter-spacing:-0.05px">21.01.2022 15:17</div>
<div class="pill" style="left:1066px;top:327px;width:178px;height:24px"></div>
<div class="cell nm" style="left:403px;top:390.5px">О внесении изменений в План закупок, размещения заказов на поставку
товаров, выполнение работ, оказание услуг для обеспечения нужд на 2022
год</div>
<div class="cell" style="left:1070px;top:419.5px">Не утвержден</div>
<div class="cell" style="left:1298px;top:390.5px;letter-spacing:-0.05px">21.01.2022 14:43</div>
<div class="pill" style="left:1067px;top:392px;width:178px;height:24px"></div>
<div class="cell nm" style="left:403px;top:465px">О возмещении расходов работникам АО '</div>
<div class="cell" style="left:882px;top:465px;letter-spacing:-0.16px">Пр-20-22 от 21.01.2022</div>
<div class="cell" style="left:1070px;top:494px;letter-spacing:-0.08px">Утвержден</div>
<div class="cell" style="left:1298px;top:465px;letter-spacing:-0.05px">21.01.2022 14:05</div>
<div class="pill" style="left:1069px;top:463px;width:178px;height:24px"></div>
<div class="cell nm" style="left:403px;top:523px">О возмещении расходов работникам АО '</div>
<div class="cell" style="left:882px;top:523px;letter-spacing:-0.16px">Пр-19-22 от 21.01.2022</div>
<div class="cell" style="left:1070px;top:552px;letter-spacing:-0.08px">Утвержден</div>
<div class="cell" style="left:1298px;top:523px;letter-spacing:-0.05px">21.01.2022 14:00</div>
<div class="pill" style="left:1069px;top:519px;width:178px;height:24px"></div>
<div class="cell nm" style="left:403px;top:581px;letter-spacing:-0.08px">Об изменении режима движения на объекте автомобильная дорога
Аксарка-Салемал-Панаевск-Яр-Сале, в том числе зимник</div>
<div class="cell" style="left:882px;top:581px;letter-spacing:-0.16px">Пр-18-22 от 21.01.2022</div>
<div class="cell" style="left:1070px;top:610px;letter-spacing:-0.08px">Утвержден</div>
<div class="cell" style="left:1298px;top:581px;letter-spacing:-0.05px">21.01.2022 08:57</div>
<div class="pill" style="left:1069px;top:577px;width:199px;height:24px"></div>
<div class="cell nm" style="left:403px;top:639px">Об утверждении составов комиссий</div>
<div class="cell" style="left:882px;top:639px;letter-spacing:-0.16px">Пр-17-22 от 20.01.2022</div>
<div class="cell" style="left:1070px;top:668px;letter-spacing:-0.08px">Утвержден</div>
<div class="cell" style="left:1298px;top:639px;letter-spacing:-0.05px">20.01.2022 15:47</div>
<div class="pill" style="left:1069px;top:635px;width:187px;height:24px"></div>
<div class="cell nm" style="left:403px;top:697px">Об инструкции по делопроизводству в АО</div>
<div class="cell" style="left:1070px;top:726px">Не утвержден</div>
<div class="cell" style="left:1298px;top:697px;letter-spacing:-0.05px">20.01.2022 13:56</div>
<div class="pill" style="left:1069px;top:693px;width:199px;height:24px"></div>
<div class="cell nm" style="left:403px;top:755px;letter-spacing:-0.055px">На предоставление дополнительного дня отдыха</div>
<div class="cell" style="left:882px;top:755px;letter-spacing:-0.16px">Пр-3-22 от 20.01.2022</div>
<div class="cell" style="left:1298px;top:755px;letter-spacing:-0.05px">20.01.2022 12:13</div>
<div class="pill" style="left:1071px;top:753px;width:178px;height:24px"></div>
<div class="cell" style="left:749.5px;top:465px">заключившим
</div>
<div class="cell" style="left:403px;top:481px">договор аренды жилого помещения</div>
<div class="cell" style="left:748.5px;top:523px">заключившим</div>
<div class="cell" style="left:403px;top:539px">договор аренды жилого помещения</div>
<div class="pill" style="left:656px;top:459px;width:94px;height:24px;border-radius:8px"></div>
<div class="pill" style="left:656px;top:520px;width:87px;height:24px;border-radius:8px"></div>
<div class="pill" style="left:662px;top:693px;width:114px;height:24px;border-radius:8px"></div>
<div class="cell" style="left:1269px;top:697px">..</div>
<svg class="abs" style="left:330.2px;top:270.6px" width="13.6" height="13.6" viewBox="0 0 15 15"><g fill="none" stroke="#6e6e6e" stroke-width="1.4" stroke-linecap="round"><path d="M10.4 4.6 L5 10 A1.5 1.5 0 0 0 7.2 12.2 L12.4 7 A3.1 3.1 0 0 0 8 2.6 L2.8 7.8 A4.4 4.4 0 0 0 9 14 L10.6 12.4"/></g></svg>
<svg class="abs" style="left:365px;top:269px" width="18" height="18" viewBox="0 0 18 18"><circle cx="9" cy="9" r="7.6" fill="#eeeafa" stroke="#6e5fc4" stroke-width="1"/><circle cx="9" cy="9" r="5.6" fill="#f4f1fc" stroke="#7e70cc" stroke-width="1"/><path d="M6.2 7.6 L11.8 7.6 M6.2 10.6 L11.8 10.6" stroke="#8a7ed0" stroke-width="1.4"/></svg>
<svg class="abs" style="left:328px;top:301.5px" width="18" height="15" viewBox="0 0 18 15"><path d="M1 13.6 L1 10.4 Q1 8.6 3.6 8.2 L6.4 8.2 Q9 8.6 9 10.4 L9 13.6 Z" fill="#3f6f9f"/><path d="M4.2 8.4 L5.8 8.4 L5.4 13.4 L4.6 13.4 Z" fill="#c86b5a"/><circle cx="5" cy="5.6" r="2.5" fill="#f3c9a0"/><path d="M2.4 5.4 Q2.4 2.4 5 2.4 Q7.6 2.4 7.6 5.2 Q6 3.8 2.4 5.4 Z" fill="#a86a28"/><path d="M8 12.6 L8 8.8 Q8 7 10.6 6.6 L14 6.6 Q16.8 7 16.8 8.8 L16.8 12.6 Z" fill="#1f2f5f"/><path d="M11.4 6.8 L13.2 6.8 L12.9 12 L11.8 12 Z" fill="#e8eef4"/><circle cx="12.3" cy="3.8" r="2.6" fill="#f3c9a0"/><path d="M9.6 3.6 Q9.6 .6 12.3 .6 Q15 .6 15 3.4 Q13.2 2 9.6 3.6 Z" fill="#2a2a30"/></svg>
<svg class="abs" style="left:330px;top:333px" width="17" height="16" viewBox="0 0 17 16"><g fill="none" stroke="#8a8a8a" stroke-width="1.4" stroke-linecap="round"><path d="M9.6 3.4 L4.4 8.6 A1.5 1.5 0 0 0 6.6 10.8 L11.4 6 A2.8 2.8 0 0 0 7.4 2 L2.4 7 A4 4 0 0 0 5 13"/></g><rect x="7.8" y="6.8" width="6.6" height="7.8" fill="#f6fafd" stroke="#a9b4c0" stroke-width=".9"/><path d="M9.4 9 L12.8 9 M9.4 10.7 L12.8 10.7 M9.4 12.4 L12.8 12.4" stroke="#9fb0c4" stroke-width=".8"/></svg>
<svg class="abs" style="left:330px;top:391px" width="14" height="14" viewBox="0 0 14 14"><g fill="none" stroke="#8a8a8a" stroke-width="1.4" stroke-linecap="round"><path d="M9.4 4.2 L4.6 9 A1.4 1.4 0 0 0 6.6 11 L11.2 6.4 A2.9 2.9 0 0 0 7.2 2.4 L2.6 7 A4.2 4.2 0 0 0 8.4 13 L10 11.4"/></g></svg>
<svg class="abs" style="left:330px;top:465px" width="17" height="16" viewBox="0 0 17 16"><g fill="none" stroke="#8a8a8a" stroke-width="1.4" stroke-linecap="round"><path d="M9.6 3.4 L4.4 8.6 A1.5 1.5 0 0 0 6.6 10.8 L11.4 6 A2.8 2.8 0 0 0 7.4 2 L2.4 7 A4 4 0 0 0 5 13"/></g><rect x="7.8" y="6.8" width="6.6" height="7.8" fill="#f6fafd" stroke="#a9b4c0" stroke-width=".9"/><path d="M9.4 9 L12.8 9 M9.4 10.7 L12.8 10.7 M9.4 12.4 L12.8 12.4" stroke="#9fb0c4" stroke-width=".8"/></svg>
<svg class="abs" style="left:330px;top:523px" width="17" height="16" viewBox="0 0 17 16"><g fill="none" stroke="#8a8a8a" stroke-width="1.4" stroke-linecap="round"><path d="M9.6 3.4 L4.4 8.6 A1.5 1.5 0 0 0 6.6 10.8 L11.4 6 A2.8 2.8 0 0 0 7.4 2 L2.4 7 A4 4 0 0 0 5 13"/></g><rect x="7.8" y="6.8" width="6.6" height="7.8" fill="#f6fafd" stroke="#a9b4c0" stroke-width=".9"/><path d="M9.4 9 L12.8 9 M9.4 10.7 L12.8 10.7 M9.4 12.4 L12.8 12.4" stroke="#9fb0c4" stroke-width=".8"/></svg>
<svg class="abs" style="left:330px;top:581px" width="17" height="16" viewBox="0 0 17 16"><g fill="none" stroke="#8a8a8a" stroke-width="1.4" stroke-linecap="round"><path d="M9.6 3.4 L4.4 8.6 A1.5 1.5 0 0 0 6.6 10.8 L11.4 6 A2.8 2.8 0 0 0 7.4 2 L2.4 7 A4 4 0 0 0 5 13"/></g><rect x="7.8" y="6.8" width="6.6" height="7.8" fill="#f6fafd" stroke="#a9b4c0" stroke-width=".9"/><path d="M9.4 9 L12.8 9 M9.4 10.7 L12.8 10.7 M9.4 12.4 L12.8 12.4" stroke="#9fb0c4" stroke-width=".8"/></svg>
<svg class="abs" style="left:330px;top:639px" width="17" height="16" viewBox="0 0 17 16"><g fill="none" stroke="#8a8a8a" stroke-width="1.4" stroke-linecap="round"><path d="M9.6 3.4 L4.4 8.6 A1.5 1.5 0 0 0 6.6 10.8 L11.4 6 A2.8 2.8 0 0 0 7.4 2 L2.4 7 A4 4 0 0 0 5 13"/></g><rect x="7.8" y="6.8" width="6.6" height="7.8" fill="#f6fafd" stroke="#a9b4c0" stroke-width=".9"/><path d="M9.4 9 L12.8 9 M9.4 10.7 L12.8 10.7 M9.4 12.4 L12.8 12.4" stroke="#9fb0c4" stroke-width=".8"/></svg>
<svg class="abs" style="left:330px;top:697px" width="14" height="14" viewBox="0 0 14 14"><g fill="none" stroke="#8a8a8a" stroke-width="1.4" stroke-linecap="round"><path d="M9.4 4.2 L4.6 9 A1.4 1.4 0 0 0 6.6 11 L11.2 6.4 A2.9 2.9 0 0 0 7.2 2.4 L2.6 7 A4.2 4.2 0 0 0 8.4 13 L10 11.4"/></g></svg>
<svg class="abs" style="left:328px;top:726px" width="18" height="15" viewBox="0 0 18 15"><path d="M1 13.6 L1 10.4 Q1 8.6 3.6 8.2 L6.4 8.2 Q9 8.6 9 10.4 L9 13.6 Z" fill="#3f6f9f"/><path d="M4.2 8.4 L5.8 8.4 L5.4 13.4 L4.6 13.4 Z" fill="#c86b5a"/><circle cx="5" cy="5.6" r="2.5" fill="#f3c9a0"/><path d="M2.4 5.4 Q2.4 2.4 5 2.4 Q7.6 2.4 7.6 5.2 Q6 3.8 2.4 5.4 Z" fill="#a86a28"/><path d="M8 12.6 L8 8.8 Q8 7 10.6 6.6 L14 6.6 Q16.8 7 16.8 8.8 L16.8 12.6 Z" fill="#1f2f5f"/><path d="M11.4 6.8 L13.2 6.8 L12.9 12 L11.8 12 Z" fill="#e8eef4"/><circle cx="12.3" cy="3.8" r="2.6" fill="#f3c9a0"/><path d="M9.6 3.6 Q9.6 .6 12.3 .6 Q15 .6 15 3.4 Q13.2 2 9.6 3.6 Z" fill="#2a2a30"/></svg>
<svg class="abs" style="left:332px;top:756.5px" width="11" height="11" viewBox="0 0 11 11"><path d="M5.4 1 L9.8 9.4 L1 9.4 Z" fill="#f0cc2a" stroke="#c9a21a" stroke-width=".9" stroke-linejoin="round"/><path d="M5.4 3.6 L5.4 6.6" stroke="#222" stroke-width="1.2"/><circle cx="5.4" cy="8" r=".7" fill="#222"/></svg>
<div class="abs" style="left:1347px;top:781px;width:97px;height:22px;border:1px solid #b5b5b5;border-top-color:#a9a9a9;background:#fff"></div>
<div class="abs" style="left:1396px;top:782px;width:47px;height:20px;background:linear-gradient(#fff 0,#fff 45%,#ededed 100%)"></div>
<div class="abs" style="left:1371px;top:781px;width:1px;height:21px;background:#b5b5b5"></div>
<div class="abs" style="left:1395px;top:781px;width:1px;height:21px;background:#b5b5b5"></div>
<div class="abs" style="left:1419px;top:781px;width:1px;height:21px;background:#b5b5b5"></div>
<svg class="abs" style="left:1353.5px;top:786px" width="12" height="11" viewBox="0 0 12 11"><path d="M1.2 2 L10.8 2 L10.8 3.2 L6.9 3.2 L10.8 8.2 L1.2 8.2 L5.1 3.2 L1.2 3.2 Z" fill="#b3b3b3"/></svg>
<svg class="abs" style="left:1377.5px;top:786px" width="12" height="11" viewBox="0 0 12 11"><path d="M6 3 L10.8 8.2 L1.2 8.2 Z" fill="#b3b3b3"/></svg>
<svg class="abs" style="left:1401.5px;top:786px" width="12" height="11" viewBox="0 0 12 11"><path d="M6 8.2 L10.8 3 L1.2 3 Z" fill="#333"/></svg>
<svg class="abs" style="left:1425.5px;top:786px" width="12" height="11" viewBox="0 0 12 11"><path d="M1.2 9.4 L10.8 9.4 L10.8 8.2 L6.9 8.2 L10.8 3.2 L1.2 3.2 L5.1 8.2 L1.2 8.2 Z" fill="#333"/></svg>
<!--TABS-->
<div class="abs" id="tabs"></div>
<div class="abs" style="left:22px;top:839px;width:1px;height:8px;background:#000"></div>
<div class="abs" style="left:198px;top:816px;width:174px;height:31px;background:#fff;border-left:1px solid #c6c6c6;border-right:1px solid #c6c6c6"></div>
<div class="abs" style="left:202px;top:842.5px;width:166px;height:2px;background:#0f9d58"></div>
<svg class="abs" style="left:32.6px;top:823.4px" width="16.8" height="14.2" viewBox="0 0 16 14"><path d="M8 1 L15 7.2 L12.9 7.2 L12.9 13 L9.6 13 L9.6 8.8 L6.4 8.8 L6.4 13 L3.1 13 L3.1 7.2 L1 7.2 Z" fill="#4a4a4a"/></svg>
<div class="t" id="tab1" style="letter-spacing:-0.17px;left:59.3px;top:824px;color:#333">Начальная страница</div>
<div class="t" id="tab2" style="letter-spacing:-0.095px;left:209.2px;top:824px;color:#333">Внутренние документы</div>
<svg class="abs" style="left:355px;top:826px" width="10" height="10" viewBox="0 0 10 10"><path d="M1.8 1.8 L8.2 8.2 M8.2 1.8 L1.8 8.2" stroke="#444" stroke-width="1.7"/></svg>

</body>
</html>
